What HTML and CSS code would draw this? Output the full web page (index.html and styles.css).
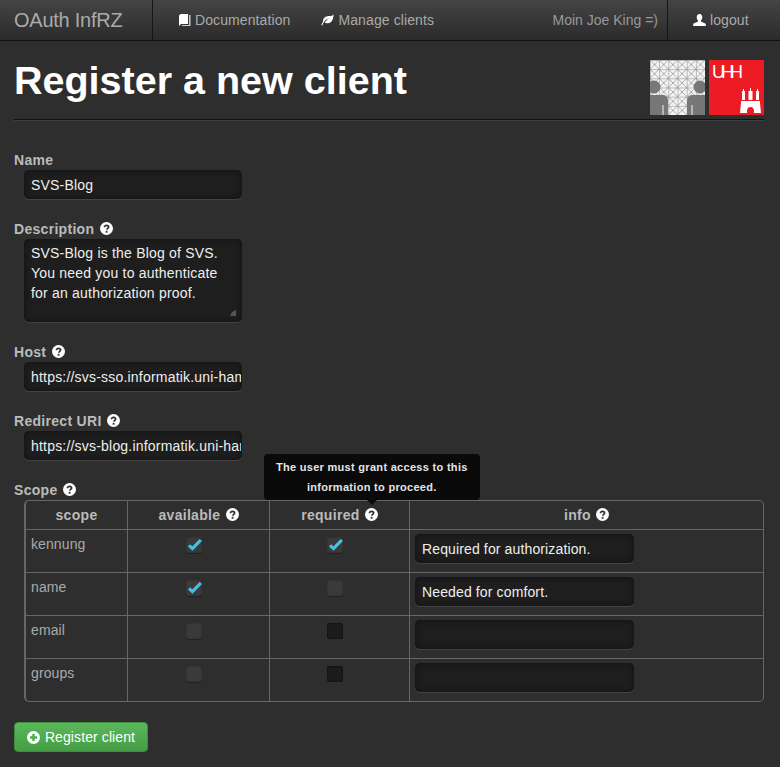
FILE: index.html
```html
<!DOCTYPE html>
<html lang="en">
<head>
    <meta charset="UTF-8">
    <meta name="viewport" content="width=device-width, initial-scale=1.0">
    <title>OAuth InfRZ</title>
    <link rel="stylesheet" href="styles.css">
</head>
<body>
    <svg class="sprites" width="0" height="0" aria-hidden="true">
        <symbol id="i-help" viewBox="0 0 13 13">
            <circle cx="6.5" cy="6.5" r="6.5" fill="#fff"/>
            <path d="M4.4 5.2c0-1.2 1-1.8 2.100-1.800s2.100.6 2.100 1.700c0 1.300-1.700 1.400-1.700 2.600" fill="none" stroke="#2e2e2e" stroke-width="1.700"/>
            <rect x="5.700" y="8.900" width="1.800" height="1.800" fill="#2e2e2e"/>
        </symbol>
        <symbol id="i-check" viewBox="0 0 16 16">
            <path d="M3 8.400 6.500 11.600 14.800 3" fill="none" stroke="#3fc4e6" stroke-width="3.200"/>
        </symbol>
    </svg>

    <header class="navbar">
        <a class="brand" href="#">OAuth InfRZ</a>
        <nav class="nav-main">
            <a href="#">
                <svg class="nav-icon nav-icon-book" viewBox="0 0 12 12"><path d="M0 1.500 1.500 0H9v10H2L0 12z" fill="#fff"/><path d="M10 1h1.500v11H2.500l.8-1H10z" fill="#ccc"/></svg>
                Documentation
            </a>
            <a href="#">
                <svg class="nav-icon" viewBox="0 0 13 12"><path d="M12.600.4C12.400 4 11.600 8.600 6.800 9.200 5.400 9.400 4.400 9 3.600 8.500 5 6.600 6.800 5 9 4 6.400 4.600 4.200 6.200 2.800 8.200 2.400 8.800 1.800 10.200 1.400 11.400L.3 11C.8 9.600 1.500 8.400 2.100 7.500 1.500 4 5 1.900 8.500 2 10 2 11.600 1.500 12.600.4z" fill="#fff"/></svg>
                Manage clients
            </a>
        </nav>
        <span class="greeting">Moin Joe King =)</span>
        <a class="logout" href="#">
            <svg class="nav-icon" viewBox="0 0 13 12"><path d="M6.500 0C8.300 0 9.300 1.300 9.300 3.200 9.300 4.700 8.600 5.900 8 6.500V7.500L12.800 9.700V12H.2V9.700L5 7.500V6.500C4.400 5.900 3.700 4.700 3.700 3.200 3.700 1.300 4.700 0 6.500 0z" fill="#fff"/></svg>
            logout
        </a>
    </header>

    <div class="container">
        <div class="page-header">
            <h1>Register a new client</h1>
            <div class="logos">
                <svg class="logo" viewBox="0 0 55 55">
                    <defs>
                        <pattern id="mesh" width="9.170" height="9.170" patternUnits="userSpaceOnUse">
                            <rect width="9.170" height="9.170" fill="#f4f4f4"/>
                            <path d="M0 0 9.170 9.170M9.170 0 0 9.170" stroke="#999" stroke-width=".8"/>
                            <path d="M0 0H9.170M0 0V9.170" stroke="#a0a0a0" stroke-width="1.400"/>
                        </pattern>
                    </defs>
                    <rect width="55" height="55" fill="url(#mesh)"/>
                    <g fill="#777">
                        <circle cx="4" cy="27" r="6.500"/>
                        <circle cx="50" cy="27" r="6.500"/>
                        <path d="M0 35H13C16 35 18 37 18 41V55H0z"/>
                        <path d="M55 35H42C39 35 37 37 37 41V55H55z"/>
                    </g>
                    <path d="M13 45V55M42 45V55" stroke="#f4f4f4" stroke-width="1"/>
                </svg>
                <svg class="logo" viewBox="0 0 55 55">
                    <rect width="55" height="55" fill="#ed1c24"/>
                    <text class="logo-text" x="3" y="18">UHH</text>
                    <g fill="#fff">
                        <rect x="33" y="31" width="3" height="9"/>
                        <rect x="39.500" y="31" width="4" height="9"/>
                        <rect x="47" y="31" width="3" height="9"/>
                        <rect x="34" y="29" width="1" height="2"/>
                        <rect x="41" y="28" width="1" height="3"/>
                        <rect x="48" y="29" width="1" height="2"/>
                        <path d="M32 41H51V43L52 53H45V51C45 49 44 47 41.500 47S38 49 38 51V53H31L32 43z"/>
                    </g>
                </svg>
            </div>
        </div>

        <form class="client-form" action="#" method="post">
            <div class="field">
                <label for="name">Name</label>
                <input type="text" id="name" class="control" value="SVS-Blog">
            </div>
            <div class="field">
                <label for="description">Description <svg class="help"><use href="#i-help"/></svg></label>
                <textarea id="description" class="control control-area">SVS-Blog is the Blog of SVS. You need you to authenticate for an authorization proof.</textarea>
            </div>
            <div class="field">
                <label for="host">Host <svg class="help"><use href="#i-help"/></svg></label>
                <input type="text" id="host" class="control" value="https://svs-sso.informatik.uni-hamburg.de/">
            </div>
            <div class="field">
                <label for="redirect">Redirect URI <svg class="help"><use href="#i-help"/></svg></label>
                <input type="text" id="redirect" class="control" value="https://svs-blog.informatik.uni-hamburg.de/">
            </div>
            <div class="field">
                <label>Scope <svg class="help"><use href="#i-help"/></svg></label>
                <table class="scopes">
                    <colgroup>
                        <col class="col-scope">
                        <col class="col-available">
                        <col class="col-required">
                        <col>
                    </colgroup>
                    <thead>
                        <tr>
                            <th>scope</th>
                            <th>available <svg class="help"><use href="#i-help"/></svg></th>
                            <th>required
                                <span class="tip-anchor">
                                    <svg class="help"><use href="#i-help"/></svg>
                                    <span class="tooltip">The user must grant access to this information to proceed.</span>
                                </span>
                            </th>
                            <th>info <svg class="help"><use href="#i-help"/></svg></th>
                        </tr>
                    </thead>
                    <tbody>
                        <tr>
                            <td>kennung</td>
                            <td class="center"><span class="check"><svg><use href="#i-check"/></svg></span></td>
                            <td class="center"><span class="check"><svg><use href="#i-check"/></svg></span></td>
                            <td><input type="text" class="control control-info" value="Required for authorization."></td>
                        </tr>
                        <tr>
                            <td>name</td>
                            <td class="center"><span class="check"><svg><use href="#i-check"/></svg></span></td>
                            <td class="center"><span class="check"></span></td>
                            <td><input type="text" class="control control-info" value="Needed for comfort."></td>
                        </tr>
                        <tr>
                            <td>email</td>
                            <td class="center"><span class="check"></span></td>
                            <td class="center"><span class="check check-off"></span></td>
                            <td><input type="text" class="control control-info"></td>
                        </tr>
                        <tr>
                            <td>groups</td>
                            <td class="center"><span class="check"></span></td>
                            <td class="center"><span class="check check-off"></span></td>
                            <td><input type="text" class="control control-info"></td>
                        </tr>
                    </tbody>
                </table>
            </div>
            <button type="submit" class="btn-register">
                <svg class="btn-icon" viewBox="0 0 13 13">
                    <circle cx="6.500" cy="6.500" r="6.500" fill="#fff"/>
                    <path d="M6.500 3v7M3 6.500h7" stroke="#4cae4c" stroke-width="2.400"/>
                </svg>
                Register client
            </button>
        </form>
    </div>
</body>
</html>
```
FILE: styles.css
```css
body {
    margin: 0;
    padding: 0;
    font-family: "Liberation Sans", Arial, sans-serif;
    font-size: 14px;
    line-height: 20px;
    letter-spacing: 0.1px;
    background: #2e2e2e;
    color: #aaa;
}

.sprites {
    position: absolute;
}

.navbar {
    display: flex;
    align-items: center;
    height: 40px;
    border-bottom: 1px solid #111;
    background: linear-gradient(#444, #2b2b2b);
}

.navbar a {
    color: #aaa;
    text-decoration: none;
}

.brand {
    flex: none;
    display: block;
    width: 108px;
    padding: 0 30px 0 14px;
    border-right: 1px solid #161616;
    font-size: 20px;
    line-height: 40px;
    letter-spacing: -0.25px;
    white-space: nowrap;
}

.nav-main {
    display: flex;
    flex: 1;
    margin-left: 11px;
}

.nav-main a {
    padding: 0 15px;
    line-height: 40px;
}

.nav-main a + a {
    margin-left: 1px;
}

.nav-icon {
    width: 13px;
    height: 12px;
    vertical-align: -1px;
}

.nav-icon-book {
    width: 12px;
}

.greeting {
    padding-right: 9px;
    letter-spacing: 0;
    color: #999;
}

.logout {
    display: block;
    width: 87px;
    padding-left: 25px;
    border-left: 1px solid #161616;
    line-height: 40px;
}

.container {
    padding: 0 16px 15px 14px;
}

.page-header {
    display: flex;
    justify-content: space-between;
    align-items: flex-start;
    padding: 19px 0 4px;
    border-bottom: 1px solid #111;
    box-shadow: 0 1px 0 rgba(255, 255, 255, 0.08);
}

.page-header h1 {
    margin: 0;
    font-size: 39.5px;
    line-height: 40px;
    letter-spacing: 0;
    color: #fff;
}

.logos {
    display: flex;
    gap: 4px;
}

.logo {
    display: block;
    width: 55px;
    height: 55px;
}

.logo-text {
    font-family: "Liberation Sans", Arial, sans-serif;
    font-size: 18px;
    letter-spacing: -4px;
    fill: #fff;
}

.client-form {
    padding-top: 30px;
}

.field {
    margin-bottom: 20px;
}

.field label {
    display: block;
    font-weight: bold;
    letter-spacing: 0.3px;
    color: #bbb;
}

.help {
    width: 13px;
    height: 13px;
    margin-left: 1px;
    vertical-align: -1px;
}

.control {
    display: block;
    box-sizing: border-box;
    width: 218px;
    height: 29px;
    margin-left: 10px;
    padding: 4px 1px 4px 7px;
    border: 0;
    border-radius: 5px;
    outline: none;
    background: #1e1e1e;
    box-shadow: inset 0 0 6px rgba(0, 0, 0, 0.5), 0 1px 0 rgba(255, 255, 255, 0.1);
    color: #eee;
    font-family: inherit;
    font-size: 14px;
    line-height: 20px;
    letter-spacing: 0.2px;
}

.control-area {
    height: 83px;
    padding-right: 6px;
    resize: vertical;
}

.control-area::-webkit-resizer {
    background: linear-gradient(135deg, transparent 50%, #555 50%) 2px 2px / 7px 7px no-repeat;
}

.control-info {
    width: 219px;
    margin: 0 0 5px;
    letter-spacing: 0.13px;
}

.scopes {
    box-sizing: border-box;
    width: 740px;
    margin-left: 10px;
    table-layout: fixed;
    border-collapse: separate;
    border-spacing: 0;
    border: 1px solid #666;
    border-left-width: 2px;
    border-radius: 5px;
}

.col-scope {
    width: 101px;
}

.col-available {
    width: 142px;
}

.col-required {
    width: 140px;
}

.scopes th,
.scopes td {
    padding: 4px 5px;
    border-left: 1px solid #666;
    border-top: 1px solid #666;
    text-align: left;
    vertical-align: top;
}

.scopes th {
    border-top: 0;
    text-align: center;
    color: #bbb;
    letter-spacing: 0.3px;
}

.scopes th:first-child,
.scopes td:first-child {
    border-left: 0;
}

.scopes td.center {
    text-align: center;
}

.check {
    display: inline-block;
    width: 16px;
    height: 16px;
    margin: 3px 9px 0 0;
    border-radius: 3px;
    background: #3a3a3a;
    box-shadow: 0 1px 0 #1e2226, inset 0 0 2px rgba(0, 0, 0, 0.3);
    vertical-align: top;
}

.check svg {
    display: block;
    width: 16px;
    height: 16px;
    overflow: visible;
}

.check-off {
    background: #1c1c1c;
    box-shadow: inset 0 0 2px #000;
}

.tip-anchor {
    position: relative;
    display: inline-block;
}

.tooltip {
    position: absolute;
    bottom: 25px;
    left: calc(50% + 1px);
    width: 216px;
    padding: 3px 8px;
    box-sizing: border-box;
    transform: translateX(-50%);
    border-radius: 4px;
    background: #0a0a0a;
    color: #e4e4e4;
    font-size: 11px;
    letter-spacing: 0.3px;
    text-align: center;
}

.tooltip::after {
    content: "";
    position: absolute;
    top: 100%;
    left: 50%;
    margin-left: -5px;
    border: 5px solid transparent;
    border-bottom: 0;
    border-top-color: #0a0a0a;
}

.btn-register {
    display: block;
    box-sizing: border-box;
    width: 134px;
    height: 30px;
    padding: 0;
    border: 1px solid #3e8e3e;
    border-radius: 4px;
    background: linear-gradient(#5cb85c, #449d44);
    color: #fff;
    font-family: inherit;
    font-size: 14px;
    letter-spacing: 0.1px;
    cursor: pointer;
}

.btn-icon {
    width: 13px;
    height: 13px;
    margin-right: 1px;
    vertical-align: -2px;
}
```
